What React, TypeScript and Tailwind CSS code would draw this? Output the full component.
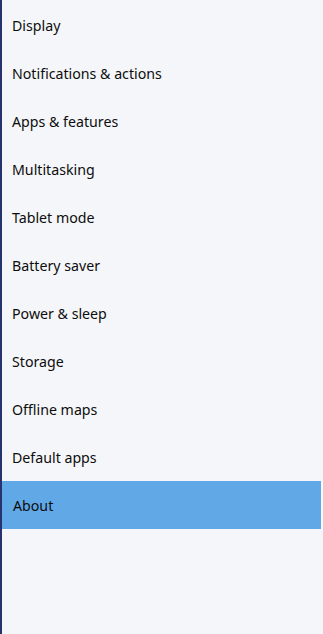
import React from "react";

const items = [
  "Display",
  "Notifications & actions",
  "Apps & features",
  "Multitasking",
  "Tablet mode",
  "Battery saver",
  "Power & sleep",
  "Storage",
  "Offline maps",
  "Default apps",
  "About",
];

export default function App() {
  return (
    <div
      className="w-[323px] h-[634px] bg-[#f5f6f9] border-l-2 border-[#26336e] pt-px overflow-hidden"
      style={{ fontFamily: '"Segoe UI", "Noto Sans", "Open Sans", sans-serif' }}
    >
      <ul className="flex flex-col pr-[2px]">
        {items.map((label) => (
          <li
            key={label}
            className={
              label === "About"
                ? "h-12 flex items-center pt-[2px] pl-[11px] bg-[#60a8e6] text-[14.2px] text-[#0d0d0d]"
                : "h-12 flex items-center pt-[2px] pl-[10px] text-[14.2px] text-[#0d0d0d]"
            }
          >
            {label}
          </li>
        ))}
      </ul>
    </div>
  );
}
